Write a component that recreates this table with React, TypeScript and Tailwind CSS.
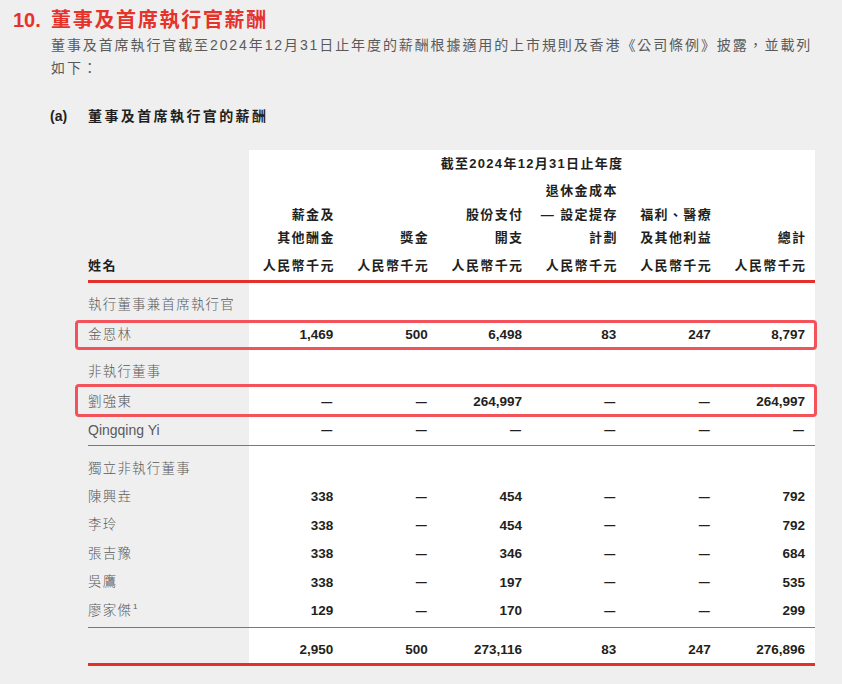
import React from "react";

const D = "—";

type RowProps = {
  name?: React.ReactNode;
  vals?: string[];
  h: string;
  pad?: string;
  border?: string;
  box?: string;
  latin?: boolean;
};

function Num({ v }: { v: string }) {
  if (v === D) {
    return <span className="text-[11px] font-bold text-[#231f20] mr-[1px] leading-none">—</span>;
  }
  return <span className="text-[13.5px] font-bold text-[#231f20] leading-none">{v}</span>;
}

function Row({ name, vals, h, pad = "", border = "", box, latin }: RowProps) {
  const cells = vals ?? ["", "", "", "", "", ""];
  return (
    <div className={`relative grid grid-cols-[161px_repeat(6,minmax(0,1fr))] ${h} ${border}`}>
      <div
        className={`flex items-center ${pad} ${latin ? "text-[14px] tracking-normal" : "text-[13.5px] tracking-[1.2px]"} text-[#5a5a5a] font-light whitespace-nowrap`}
      >
        {name}
      </div>
      {cells.map((v, i) => (
        <div key={i} className={`bg-white flex items-center justify-end pr-[10px] ${pad}`}>
          {v ? <Num v={v} /> : null}
        </div>
      ))}
      {box ? (
        <div className={`absolute ${box} left-[-13px] right-[-2px] border-[3px] border-[#f4525a] rounded-[4px] pointer-events-none`} />
      ) : null}
    </div>
  );
}

function Rule() {
  return <div className="h-[1px] bg-[#ea4a45]" />;
}

const headers: string[][] = [
  ["薪金及", "其他酬金"],
  ["獎金"],
  ["股份支付", "開支"],
  ["退休金成本", "— 設定提存", "計劃"],
  ["福利、醫療", "及其他利益"],
  ["總計"],
];

export default function App() {
  return (
    <div className="w-[842px] h-[684px] bg-[#efefef] overflow-hidden font-['Liberation_Sans','Noto_Sans_CJK_TC',sans-serif]">
      <div className="flex pl-[13px] pt-[6px] text-[20px] leading-[28px] font-bold text-[#e5322a]">
        <span className="w-[38px]">10.</span>
        <span className="tracking-[1.7px]">董事及首席執行官薪酬</span>
      </div>
      <div className="pl-[51px] text-[14px] leading-[23px] tracking-[1.9px] text-[#5a5a5a] whitespace-nowrap">
        <div>董事及首席執行官截至2024年12月31日止年度的薪酬根據適用的上市規則及香港《公司條例》披露，並載列</div>
        <div>如下：</div>
      </div>
      <div className="flex pl-[50px] mt-[24px] text-[14px] leading-[24px] font-bold text-[#231f20]">
        <span className="w-[38px]">(a)</span>
        <span className="tracking-[2.4px]">董事及首席執行官的薪酬</span>
      </div>

      <div className="ml-[88px] w-[727px] mt-[22px]">
        <div className="grid grid-cols-[161px_minmax(0,1fr)] h-[26px]">
          <div />
          <div className="bg-white flex items-center justify-center text-[13px] font-bold tracking-[1.3px] text-[#231f20] pt-[1px]">
            截至2024年12月31日止年度
          </div>
        </div>
        <div className="grid grid-cols-[161px_repeat(6,minmax(0,1fr))] h-[104px]">
          <div className="flex items-end pb-[2px] text-[13px] font-bold tracking-[1.4px] text-[#231f20] leading-[24px]">
            姓名
          </div>
          {headers.map((lines, i) => (
            <div
              key={i}
              className="bg-white flex flex-col justify-end items-end pb-[2px] pr-[8.5px] text-[13px] font-bold tracking-[1.4px] text-[#231f20] whitespace-nowrap"
            >
              {lines.map((l, j) => (
                <div key={j} className="leading-[23.5px]">{l}</div>
              ))}
              <div className="leading-[24px] mt-[4.5px]">人民幣千元</div>
            </div>
          ))}
        </div>
        <div className="h-[3px] bg-[#e3302a]" />

        <Row name="執行董事兼首席執行官" h="h-[36px]" pad="pt-[8px]" />
        <Row name="金恩林" vals={["1,469", "500", "6,498", "83", "247", "8,797"]} h="h-[32px]" box="top-[1px] bottom-[1px]" />
        <Row name="非執行董事" h="h-[35px]" pad="pt-[7px]" />
        <Row name="劉強東" vals={[D, D, "264,997", D, D, "264,997"]} h="h-[32px]" box="top-[-2px] bottom-[1px]" />
        <Row name="Qingqing Yi" latin vals={[D, D, D, D, D, D]} h="h-[27px]" pad="pb-[3px]" />
        <Rule />

        <Row name="獨立非執行董事" h="h-[37px]" pad="pt-[9px]" />
        <Row name="陳興垚" vals={["338", D, "454", D, D, "792"]} h="h-[28px]" />
        <Row name="李玲" vals={["338", D, "454", D, D, "792"]} h="h-[29px]" />
        <Row name="張吉豫" vals={["338", D, "346", D, D, "684"]} h="h-[28px]" />
        <Row name="吳鷹" vals={["338", D, "197", D, D, "535"]} h="h-[29px]" />
        <Row
          name={
            <span>
              廖家傑<span className="text-[8px] align-super leading-none tracking-normal ml-[1px]">1</span>
            </span>
          }
          vals={["129", D, "170", D, D, "299"]}
          h="h-[30px]"
          pad="pb-[2px]"
        />
        <Rule />
        <Row vals={["2,950", "500", "273,116", "83", "247", "276,896"]} h="h-[35px]" pad="pt-[8px]" />
        <div className="h-[3px] bg-[#e3302a]" />
      </div>
    </div>
  );
}
